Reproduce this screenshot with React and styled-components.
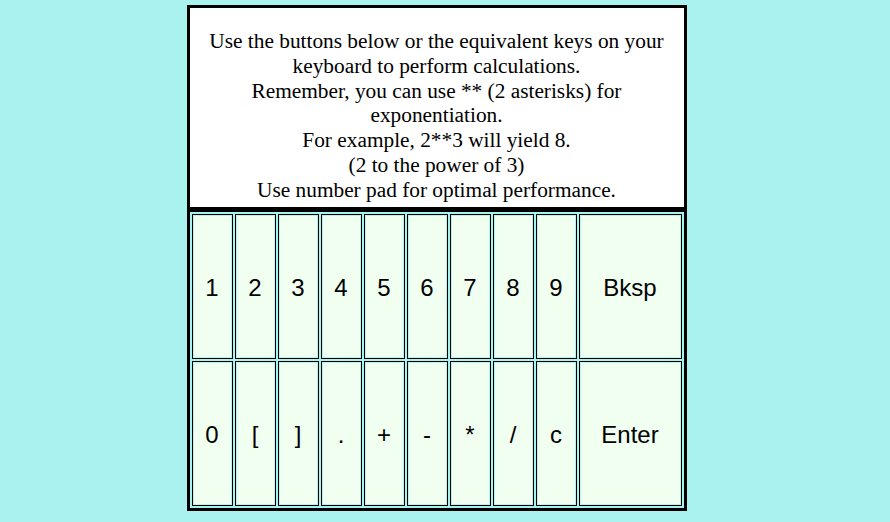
import React from "react";
import styled, { createGlobalStyle } from "styled-components";

const Global = createGlobalStyle`
  html, body { margin: 0; padding: 0; }
  body { background: #aaf2f0; }
`;

const Page = styled.div`
  width: 873px;
  height: 522px;
  padding-top: 5px;
  box-sizing: border-box;
  display: flex;
  justify-content: center;
  align-items: flex-start;
`;

const Panel = styled.div`
  width: 500px;
  box-sizing: border-box;
  border: 3px solid #000;
  display: flex;
  flex-direction: column;
`;

const Instructions = styled.div`
  background: #fff;
  box-sizing: content-box;
  height: 178px;
  padding: 21px 12px 0;
  border-bottom: 5px solid #000;
  font-family: "Liberation Serif", "Times New Roman", serif;
  font-size: 21.33px;
  line-height: 24.8px;
  text-align: center;
  color: #000;
`;

const Pad = styled.div`
  display: grid;
  grid-template-columns: repeat(9, minmax(0, 1fr)) 103px;
  grid-template-rows: 145px 145px;
  gap: 2px;
  padding: 2px;
  background: #aaf2f0;
`;

const Key = styled.div`
  border: 1px solid #000;
  box-shadow: inset 0 0 0 1px #b8f3ef;
  background: #f0fff0;
  display: flex;
  align-items: center;
  justify-content: center;
  padding-top: 2px;
  font-family: "Liberation Sans", Arial, sans-serif;
  font-size: 24px;
  color: #000;
`;

const rows = [
  ["1", "2", "3", "4", "5", "6", "7", "8", "9", "Bksp"],
  ["0", "[", "]", ".", "+", "-", "*", "/", "c", "Enter"],
];

export default function App() {
  return (
    <>
      <Global />
      <Page>
        <Panel>
          <Instructions>
            Use the buttons below or the equivalent keys on your keyboard to
            perform calculations.
            <br />
            Remember, you can use ** (2 asterisks) for exponentiation.
            <br />
            For example, 2**3 will yield 8.
            <br />
            (2 to the power of 3)
            <br />
            Use number pad for optimal performance.
          </Instructions>
          <Pad>
            {rows.flat().map((k, i) => (
              <Key key={i}>{k}</Key>
            ))}
          </Pad>
        </Panel>
      </Page>
    </>
  );
}
